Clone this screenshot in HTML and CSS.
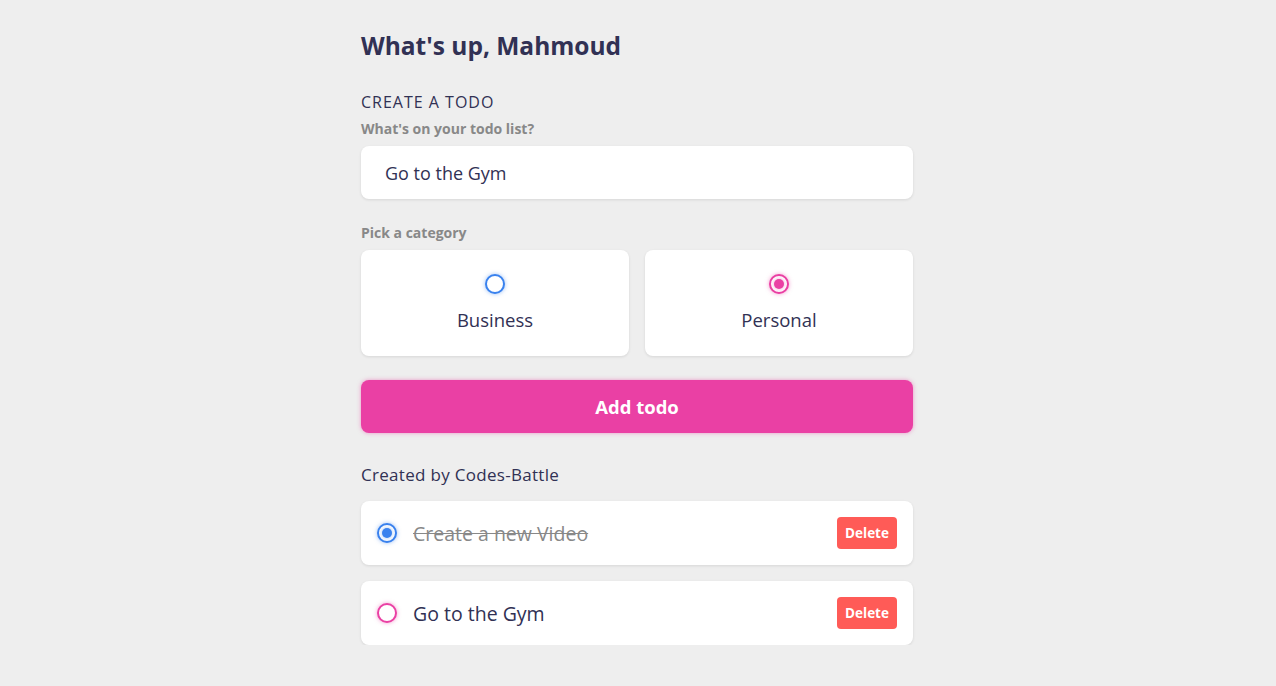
FILE: index.html
```html
<!DOCTYPE html>
<html lang="en">
<head>
<meta charset="utf-8">
<title>Todo</title>
<link rel="stylesheet" href="styles.css">
</head>
<body>
<main class="app">
  <section class="greeting">
    <h2 class="title">What's up, Mahmoud</h2>
  </section>

  <section class="create-todo">
    <h3 class="section-title">CREATE A TODO</h3>
    <form class="todo-form">
      <h4 class="field-label">What's on your todo list?</h4>
      <div class="text-input">Go to the Gym</div>

      <h4 class="field-label cat-label">Pick a category</h4>
      <div class="options">
        <label class="option">
          <span class="bubble business"></span>
          <span class="option-text">Business</span>
        </label>
        <label class="option">
          <span class="bubble personal checked"></span>
          <span class="option-text">Personal</span>
        </label>
      </div>

      <button type="button" class="add-btn">Add todo</button>
    </form>
  </section>

  <section class="todo-list">
    <h3 class="list-title">Created by Codes-Battle</h3>
    <div class="list">
      <div class="todo-item">
        <span class="bubble business checked"></span>
        <span class="todo-content done">Create a new Video</span>
        <button type="button" class="delete">Delete</button>
      </div>
      <div class="todo-item">
        <span class="bubble personal"></span>
        <span class="todo-content">Go to the Gym</span>
        <button type="button" class="delete">Delete</button>
      </div>
    </div>
  </section>
</main>
</body>
</html>
```

FILE: styles.css
```css
* {
  margin: 0;
  padding: 0;
  box-sizing: border-box;
}

html, body {
  background: #eeeeee;
}

body {
  font-family: "Open Sans", "Liberation Sans", sans-serif;
  color: #313154;
}

.app {
  width: 552px;
  margin-left: calc(50% - 277px);
  padding-top: 32px;
}

.title {
  font-size: 24.5px;
  font-weight: 700;
  line-height: 28px;
  color: #313154;
}

.create-todo {
  margin-top: 32px;
}

.section-title {
  font-size: 16px;
  font-weight: 400;
  letter-spacing: 1px;
  line-height: 20px;
  color: #313154;
}

.field-label {
  font-size: 14px;
  font-weight: 700;
  color: #888888;
  line-height: 18px;
  margin-top: 8px;
  margin-bottom: 8px;
}

.cat-label {
  margin-top: 25px;
  margin-bottom: 8px;
}

.text-input {
  height: 53px;
  background: #fff;
  border-radius: 8px;
  box-shadow: 0 1px 3px rgba(0, 0, 0, 0.1);
  padding: 0 24px;
  display: flex;
  align-items: center;
  font-size: 18px;
  color: #313154;
}

.options {
  display: grid;
  grid-template-columns: 1fr 1fr;
  gap: 16px;
}

.option {
  height: 106px;
  background: #fff;
  border-radius: 8px;
  box-shadow: 0 1px 3px rgba(0, 0, 0, 0.1);
  display: flex;
  flex-direction: column;
  align-items: center;
  padding-top: 24px;
}

.option-text {
  margin-top: 14px;
  font-size: 18.5px;
  line-height: 24px;
  color: #313154;
}

.bubble {
  width: 20px;
  height: 20px;
  border-radius: 50%;
  border: 2px solid;
  display: flex;
  align-items: center;
  justify-content: center;
  flex-shrink: 0;
  background: #fff;
}

.bubble.business {
  border-color: #3a82ee;
  box-shadow: 0 0 4px rgba(58, 130, 238, 0.5);
}

.bubble.personal {
  border-color: #ea40a4;
  box-shadow: 0 0 4px rgba(234, 64, 164, 0.5);
}

.bubble.checked::after {
  content: "";
  width: 10px;
  height: 10px;
  border-radius: 50%;
}

.bubble.business.checked::after {
  background: #3a82ee;
  box-shadow: 0 0 4px rgba(58, 130, 238, 0.5);
}

.bubble.personal.checked::after {
  background: #ea40a4;
  box-shadow: 0 0 4px rgba(234, 64, 164, 0.5);
}

.add-btn {
  margin-top: 24px;
  width: 100%;
  height: 53px;
  border: none;
  border-radius: 8px;
  background: #ea40a4;
  color: #fff;
  font-family: inherit;
  font-size: 18.5px;
  font-weight: 700;
  box-shadow: 0 0 4px rgba(234, 64, 164, 0.5);
}

.todo-list {
  margin-top: 32px;
}

.list-title {
  font-size: 17px;
  font-weight: 400;
  letter-spacing: 0.3px;
  line-height: 20px;
  color: #313154;
  margin-bottom: 16px;
}

.list {
  display: flex;
  flex-direction: column;
  gap: 16px;
}

.todo-item {
  height: 64px;
  background: #fff;
  border-radius: 8px;
  box-shadow: 0 1px 3px rgba(0, 0, 0, 0.1);
  display: flex;
  align-items: center;
  padding: 0 16px;
}

.todo-content {
  flex: 1;
  margin-left: 16px;
  font-size: 19.5px;
  color: #313154;
}

.todo-content.done {
  color: #888888;
  text-decoration: line-through;
}

.delete {
  width: 60px;
  height: 32px;
  border: none;
  border-radius: 4px;
  background: #ff5b57;
  color: #fff;
  font-family: inherit;
  font-size: 13.5px;
  font-weight: 700;
}
```
